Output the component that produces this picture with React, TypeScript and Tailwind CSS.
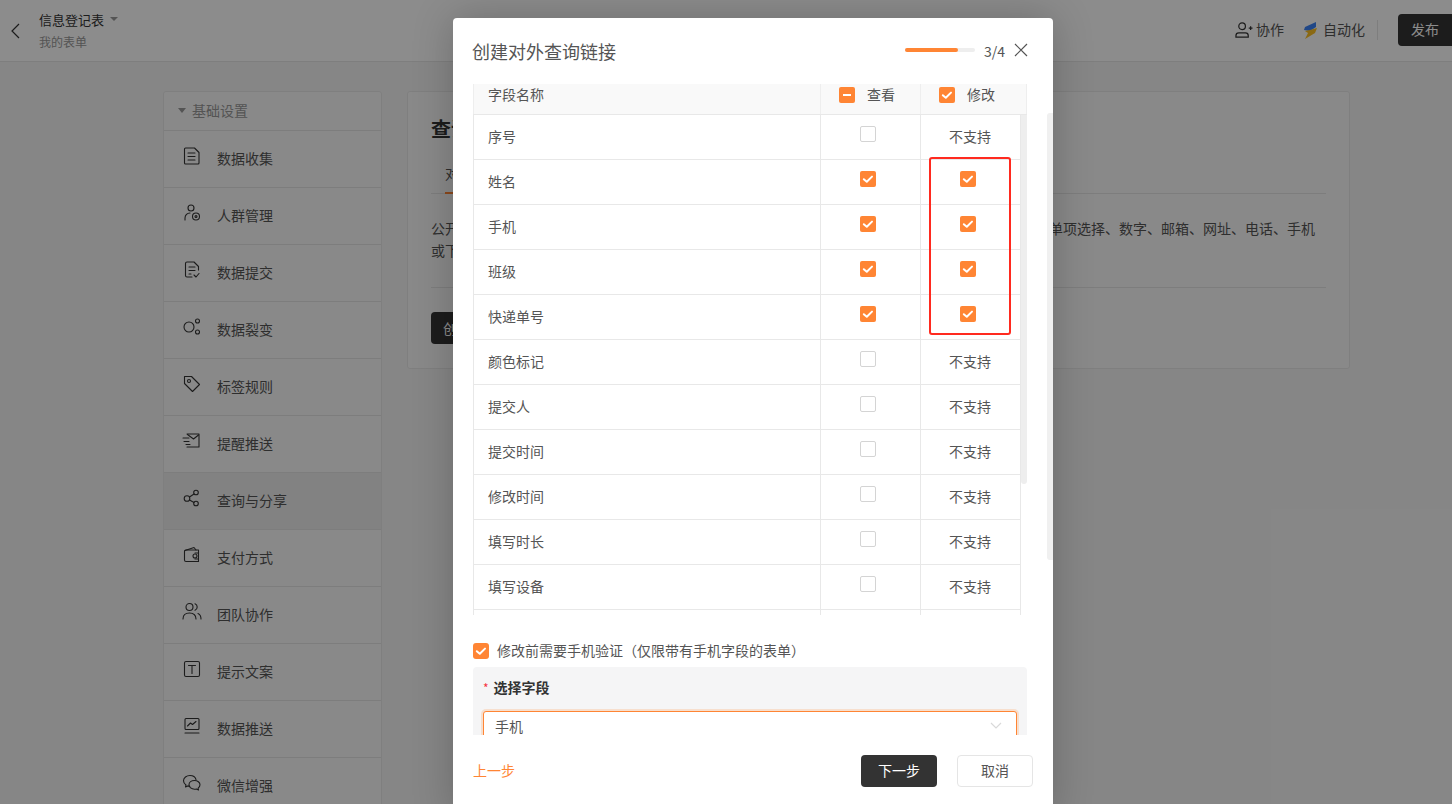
import type { ReactNode } from "react";

const icon = (children: ReactNode) => (
  <svg width="20" height="20" viewBox="0 0 20 20" fill="none" stroke="#333" strokeWidth="1.1" strokeLinecap="round" strokeLinejoin="round" className="shrink-0">
    {children}
  </svg>
);

const MENU: { name: string; icon: ReactNode; active?: boolean }[] = [
  { name: "数据收集", icon: icon(<><path d="M2.500 3a1 1 0 0 1 1-1h9l4.500 4.500v10.500a1 1 0 0 1-1 1h-12.500a1 1 0 0 1-1-1z" /><path d="M6 7h7M6 10.500h7M6 14h7" /></>) },
  { name: "人群管理", icon: icon(<><circle cx="9" cy="5" r="3" /><path d="M3 17v-2a5 5 0 0 1 5-5" /><circle cx="14" cy="13.500" r="3.500" /><circle cx="14" cy="13.500" r="1" /></>) },
  { name: "数据提交", icon: icon(<><path d="M10 17H5a1.500 1.500 0 0 1-1.500-1.500v-12A1.500 1.500 0 0 1 5 2h7l4.500 4.500V10" /><path d="M7 7h6M7 10.500h6M7 14h2M12 15l2 2 3-3.500" /></>) },
  { name: "数据裂变", icon: icon(<><circle cx="7" cy="10" r="5" /><circle cx="15.500" cy="4" r="2" /><circle cx="15.500" cy="15" r="2" /></>) },
  { name: "标签规则", icon: icon(<><path d="M2.500 2.500h7l8 8-7 7-8-8z" /><circle cx="7" cy="7" r="1.500" /></>) },
  { name: "提醒推送", icon: icon(<><path d="M5 3h12v13H5" /><path d="M5.500 3.500l6 4.500 5-4M1 7h6M2 10.500h5M4 13.500h4" /></>) },
  { name: "查询与分享", active: true, icon: icon(<><circle cx="5" cy="10.500" r="2.800" /><circle cx="14" cy="4.500" r="2.300" /><circle cx="14" cy="15.500" r="2.300" /><path d="M7.500 9l4.500-3M7.500 12l4.500 2.500" /></>) },
  { name: "支付方式", icon: icon(<><path d="M2.500 6.500a1.500 1.500 0 0 1 1.500-1.500h12.500v11.500H4a1.500 1.500 0 0 1-1.500-1.500z" /><path d="M3 5.500l9-3 2 2.500" /><circle cx="13" cy="11" r="2" /><path d="M16.500 8h-3.500M16.500 14h-3.500" /></>) },
  { name: "团队协作", icon: icon(<><circle cx="7.500" cy="5" r="3.500" /><path d="M1 17c0-4 2.500-6 6.500-6s6.500 2 6.500 6" /><path d="M13 1.800a3.500 3.500 0 0 1 0 6.500M16 11.500c1.800.8 3 2.800 3 5.500" /></>) },
  { name: "提示文案", icon: icon(<><rect x="2.500" y="2.500" width="15" height="15" rx="1.500" /><path d="M6.500 6.500h7M10 6.500v8" /></>) },
  { name: "数据推送", icon: icon(<><rect x="3" y="2.500" width="14" height="11" rx="1" /><path d="M5.500 10l3-3 2 1.500 3.500-3M3 17h14" /></>) },
  { name: "微信增强", icon: icon(<><path d="M14 6.500C13.300 4 10.800 2.500 8 2.500c-3.500 0-6.500 2.300-6.500 5.300 0 1.700 1 3.200 2.500 4.200L3.500 14l2.300-1.100c.7.200 1.300.300 2 .300" /><path d="M12.500 7.500c3 0 5.500 1.900 5.500 4.300 0 1.300-.7 2.500-1.900 3.300l.4 1.900-2.100-1c-.6.100-1.200.200-1.900.200-3 0-5.500-1.900-5.500-4.400s2.500-4.300 5.500-4.300z" /></>) },
];

const ROWS: { name: string; view: boolean; edit: boolean }[] = [
  { name: "序号", view: false, edit: false },
  { name: "姓名", view: true, edit: true },
  { name: "手机", view: true, edit: true },
  { name: "班级", view: true, edit: true },
  { name: "快递单号", view: true, edit: true },
  { name: "颜色标记", view: false, edit: false },
  { name: "提交人", view: false, edit: false },
  { name: "提交时间", view: false, edit: false },
  { name: "修改时间", view: false, edit: false },
  { name: "填写时长", view: false, edit: false },
  { name: "填写设备", view: false, edit: false },
  { name: "", view: false, edit: false },
];

function CheckMark() {
  return (
    <svg width="12" height="12" viewBox="0 0 12 12" fill="none" stroke="#fff" strokeWidth="2" strokeLinecap="round" strokeLinejoin="round">
      <path d="M1.800 6.200 4.800 8.800 10 3.600" />
    </svg>
  );
}

function Checkbox({ state }: { state: "on" | "off" | "mixed" }) {
  if (state === "off") {
    return <span className="block w-4 h-4 shrink-0 rounded-[2px] border border-[#d4d4d4] bg-white" />;
  }
  return (
    <span className="flex items-center justify-center w-4 h-4 shrink-0 rounded-[2px] bg-[#ff8534]">
      {state === "on" ? <CheckMark /> : <span className="block w-2 h-[2px] bg-white" />}
    </span>
  );
}

function TopBar() {
  return (
    <div className="flex items-center h-[62px] bg-white border-b border-[#e6e6e6]">
      <svg width="10" height="16" viewBox="0 0 10 16" fill="none" stroke="#333" strokeWidth="1.200" className="ml-[10px] mr-[19px]">
        <path d="M9 1 2 8l7 7" />
      </svg>
      <div className="flex flex-col">
        <div className="flex items-center h-[20px] text-[13px] text-[#333]">
          信息登记表
          <span className="ml-[6px] mb-[3px] w-0 h-0 border-x-[4px] border-x-transparent border-t-[4px] border-t-[#999]" />
        </div>
        <div className="mt-[3px] text-[12px] leading-[18px] text-[#999]">我的表单</div>
      </div>
      <div className="ml-auto mb-[1px] flex items-center">
        <svg width="18" height="18" viewBox="0 0 19 18" fill="none" stroke="#333" strokeWidth="1.300">
          <circle cx="7.500" cy="5" r="3.500" />
          <path d="M1 16.500v-1.500a3 3 0 0 1 3-3h7a3 3 0 0 1 3 3v1.500z" />
          <path d="M14.500 7h4M16.500 5v4" />
        </svg>
        <span className="ml-[3px] mb-[1px] text-[14px] text-[#555]">协作</span>
        <svg width="15" height="17" viewBox="0 0 15 17" className="ml-[19px]">
          <path d="M13 0 2 5 1 8l6 1 6-4z" fill="#3b82f6" />
          <path d="M14 6 7 8 2 9l3 2-3 6 10-6z" fill="#fbbf24" />
        </svg>
        <span className="ml-[5px] mb-[1px] text-[14px] text-[#555]">自动化</span>
        <span className="ml-[12px] w-px h-[20px] bg-[#e6e6e6]" />
        <button className="ml-[20px] w-[54px] h-[32px] pb-[1px] rounded-l-[4px] bg-[#333] text-[14px] text-white">发布</button>
      </div>
    </div>
  );
}

function Sidebar() {
  return (
    <div className="w-[219px] shrink-0 bg-[#fafafa] border border-[#e8e8e8] rounded-t-[3px]">
      <div className="flex items-center h-[38px] pl-[14px] pb-[2px] text-[14px] text-[#999]">
        <span className="mr-[6px] w-0 h-0 border-x-[4px] border-x-transparent border-t-[5px] border-t-[#999]" />
        基础设置
      </div>
      {MENU.map((m) => (
        <div
          key={m.name}
          className={`flex items-center h-[57px] pl-[18px] border-t border-[#e4e4e4] ${m.active ? "bg-[#ededed]" : ""}`}
        >
          <span className="mb-[6px]">{m.icon}</span>
          <span className="ml-[15px] mb-[2px] text-[14px] text-[#555]">{m.name}</span>
        </div>
      ))}
    </div>
  );
}

function MainCard() {
  return (
    <div className="w-[943px] h-[278px] ml-[25px] px-[23px] bg-[#fafafa] border border-[#e8e8e8] rounded-[3px]">
      <h2 className="mt-[22px] text-[20px] leading-[30px] font-bold text-[#333]">查询与分享</h2>
      <div className="mt-[6px] h-[44px] border-b border-[#e4e4e4]">
        <div className="inline-block ml-[14px] h-[44px] pt-[12px] border-b-2 border-[#ff8534] text-[14px] leading-[22px] text-[#555]">对外查询</div>
      </div>
      <p className="mt-[23px] text-[14px] leading-[22px] text-[#555]">
        公开查询链接可以让填写者通过查询条件查询到自己提交的数据内容，
        <span className="ml-[2px]">支持的字段类型有单行文字、单项选择、数字、邮箱、网址、电话、手机或下拉框。</span>
      </p>
      <div className="mt-[26px] border-t border-[#e4e4e4]" />
      <button className="mt-[24px] h-[32px] px-[12px] rounded-[4px] bg-[#333] text-[14px] text-white">创建链接</button>
    </div>
  );
}

function FieldTable() {
  return (
    <div className="relative h-[531px] overflow-hidden">
      <div className="-mt-[9px] grid grid-cols-[347px_100px_107px] w-[554px] h-[40px] bg-[#f9f9f9] border-b border-[#e8e8e8] text-[14px] text-[#555]">
        <div className="flex items-center pl-[14px] border-l border-[#eeeeee]">字段名称</div>
        <div className="flex items-center pl-[18px] border-l border-[#eeeeee]">
          <Checkbox state="mixed" />
          <span className="ml-[12px]">查看</span>
        </div>
        <div className="flex items-center pl-[18px] border-x border-[#eeeeee]">
          <Checkbox state="on" />
          <span className="ml-[12px]">修改</span>
        </div>
      </div>
      {ROWS.map((r, i) => (
        <div key={i} className="grid grid-cols-[347px_100px_101px] w-[548px] h-[45px] border-b border-[#e8e8e8] text-[14px] text-[#555]">
          <div className="flex items-center pl-[14px] pb-[2px] border-l border-[#e8e8e8]">{r.name}</div>
          <div className="flex items-center pl-[39px] pb-[6px] border-l border-[#e8e8e8]">
            {r.name && <Checkbox state={r.view ? "on" : "off"} />}
          </div>
          <div className="flex items-center border-x border-[#e8e8e8]">
            {r.name &&
              (r.edit ? (
                <span className="ml-[39px] mb-[6px]">
                  <Checkbox state="on" />
                </span>
              ) : (
                <span className="ml-[28px] mb-[2px]">不支持</span>
              ))}
          </div>
        </div>
      ))}
      <div className="absolute left-[548px] top-[31px] w-[6px] h-[369px] bg-[#eeeeee] rounded-b-[3px]" />
      <div className="absolute left-[456px] top-[73px] w-[82px] h-[178px] border-2 border-[#ff2a1f] rounded-[3px]" />
    </div>
  );
}

function Modal() {
  return (
    <div className="absolute left-[453px] top-[18px] w-[600px] h-[800px] bg-white rounded-[4px] shadow-[0_0_40px_rgba(0,0,0,0.22)] overflow-hidden">
      <div className="flex items-center h-[66px] pl-[19px] pr-[25px]">
        <h1 className="text-[18px] text-[#555]">创建对外查询链接</h1>
        <div className="ml-auto flex items-center">
          <div className="w-[70px] h-[4px] rounded-full bg-[#eeeeee] mb-[2px]">
            <div className="w-[53px] h-[4px] rounded-full bg-[#ff8534]" />
          </div>
          <span className="ml-[9px] text-[14px] text-[#555]">3/4</span>
          <svg width="14" height="14" viewBox="0 0 14 14" fill="none" stroke="#555" strokeWidth="1.200" className="ml-[9px] mb-[2px]">
            <path d="m1 1 12 12M13 1 1 13" />
          </svg>
        </div>
      </div>
      <div className="h-[651px] px-[20px] overflow-hidden">
        <FieldTable />
        <div className="mt-[28px] flex items-center h-[16px]">
          <span className="flex items-center justify-center w-4 h-4 rounded-[3px] bg-[#ff8534]">
            <CheckMark />
          </span>
          <span className="ml-[8px] mb-[2px] text-[14px] text-[#555]">修改前需要手机验证（仅限带有手机字段的表单）</span>
        </div>
        <div className="mt-[8px] w-[554px] px-[10px] pt-[9px] pb-[20px] bg-[#f5f5f6] rounded-[4px]">
          <div className="text-[14px] leading-[22px] font-bold text-[#333]">
            <span className="mr-[5px] font-normal text-[12px] text-[#f5333f]">*</span>
            选择字段
          </div>
          <div className="mt-[12px] flex items-center justify-between h-[32px] pl-[11px] pr-[14px] pb-[2px] bg-white border border-[#ff8534] rounded-[3px] shadow-[0_0_0_2px_rgba(255,133,52,0.2)] text-[14px] text-[#555]">
            手机
            <svg width="12" height="8" viewBox="0 0 12 8" fill="none" stroke="#d9d9d9" strokeWidth="1.200">
              <path d="m1 1 5 5 5-5" />
            </svg>
          </div>
        </div>
      </div>
      <div className="flex items-center h-[32px] mt-[20px] pl-[20px] pr-[20px]">
        <span className="mb-[2px] text-[14px] text-[#ff8534]">上一步</span>
        <button className="ml-auto w-[76px] h-[32px] pb-[2px] rounded-[4px] bg-[#333] text-[14px] text-white">下一步</button>
        <button className="ml-[20px] w-[76px] h-[32px] pb-[2px] rounded-[4px] border border-[#e5e5e5] bg-white text-[14px] text-[#555]">取消</button>
      </div>
      <div className="absolute left-[594px] top-[95px] w-[6px] h-[447px] bg-[#f0f0f0] rounded-l-[3px]" />
    </div>
  );
}

export default function App() {
  return (
    <div className="relative w-[1452px] h-[804px] overflow-hidden bg-[#f5f5f5] font-['Noto_Sans_CJK_SC',sans-serif]">
      <TopBar />
      <div className="flex items-start pt-[29px] pl-[163px]">
        <Sidebar />
        <MainCard />
      </div>
      <div className="absolute inset-0 bg-black/45" />
      <Modal />
    </div>
  );
}
